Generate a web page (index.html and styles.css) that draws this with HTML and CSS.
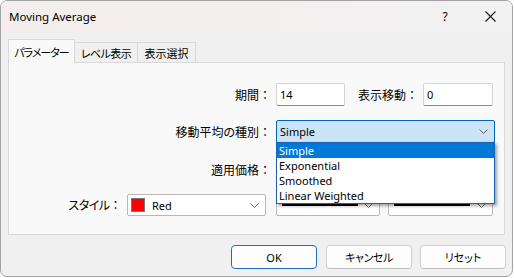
FILE: index.html
```html
<!DOCTYPE html>
<html>
    <head>
        <title>Moving Average</title>
        <link rel="stylesheet" href="styles.css">
    </head>
    <body>
        <div class="window">
            <div class="titlebar">
                <span class="title">Moving Average</span>
                <span class="help">?</span>
                <span class="close">
                    <svg width="11" height="11" viewBox="0 0 11 11"><path d="M0.5 0.5 L10.5 10.5 M10.5 0.5 L0.5 10.5" stroke="#1b1b1b" stroke-width="1.1" fill="none"/></svg>
                </span>
            </div>
            <div class="content">
                <div class="tabs">
                    <div class="tab active">パラメーター</div>
                    <div class="tab tab-level">レベル表示</div>
                    <div class="tab tab-show">表示選択</div>
                </div>
                <div class="panel">
                    <!-- period / shift -->
                    <div class="row row1">
                        <span class="lbl lbl-wide">期間<span class="colon">：</span></span>
                        <div class="input w-period">14</div>
                        <span class="lbl lbl-shift">表示移動<span class="colon">：</span></span>
                        <div class="input w-shift">0</div>
                    </div>
                    <!-- method, list is open -->
                    <div class="row row2">
                        <span class="lbl lbl-wide">移動平均の種別<span class="colon">：</span></span>
                        <div class="combo focused w-method">
                            <span class="ctext">Simple</span>
                            <svg class="chev" width="9" height="5" viewBox="0 0 9 5"><polyline points="0.5,0.5 4.5,4.5 8.5,0.5" stroke="#5f5f5f" fill="none"/></svg>
                        </div>
                        <ul class="droplist">
                            <li class="sel">Simple</li>
                            <li>Exponential</li>
                            <li>Smoothed</li>
                            <li>Linear Weighted</li>
                        </ul>
                    </div>
                    <div class="row row3">
                        <span class="lbl lbl-wide">適用価格<span class="colon">：</span></span>
                        <div class="combo w-method">
                            <svg class="chev" width="9" height="5" viewBox="0 0 9 5"><polyline points="0.5,0.5 4.5,4.5 8.5,0.5" stroke="#5f5f5f" fill="none"/></svg>
                        </div>
                    </div>
                    <div class="row row4">
                        <span class="lbl lbl-style">スタイル<span class="colon">：</span></span>
                        <div class="combo w-color">
                            <span class="swatch"></span>
                            <span class="ctext">Red</span>
                            <svg class="chev" width="9" height="5" viewBox="0 0 9 5"><polyline points="0.5,0.5 4.5,4.5 8.5,0.5" stroke="#5f5f5f" fill="none"/></svg>
                        </div>
                        <div class="combo w-width">
                            <span class="line"></span>
                            <svg class="chev" width="9" height="5" viewBox="0 0 9 5"><polyline points="0.5,0.5 4.5,4.5 8.5,0.5" stroke="#5f5f5f" fill="none"/></svg>
                        </div>
                        <div class="combo w-dash">
                            <span class="line"></span>
                            <svg class="chev" width="9" height="5" viewBox="0 0 9 5"><polyline points="0.5,0.5 4.5,4.5 8.5,0.5" stroke="#5f5f5f" fill="none"/></svg>
                        </div>
                    </div>
                </div>
                <div class="buttons">
                    <div class="btn default">OK</div>
                    <div class="btn btn-cancel">キャンセル</div>
                    <div class="btn btn-reset">リセット</div>
                </div>
            </div>
        </div>
    </body>
</html>
```

FILE: styles.css
```css
body
{
    margin: 0;
    background-color: #ffffff;
    font-family: "Noto Sans", "Noto Sans CJK JP", sans-serif;
    font-size: 11px;
    color: #000000;
    font-feature-settings: "palt";
}
.window
{
    width: 511px;
    height: 275px;
    border: 1px solid #a3a3a3;
    border-radius: 7px;
    overflow: hidden;
    background-color: #f0f0f0;
    display: flex;
    flex-direction: column;
}
.titlebar
{
    height: 31px;
    display: flex;
    align-items: center;
    background: linear-gradient(90deg, #f5eded, #f3efef 45%, #f2f2f2);
}
.title
{
    padding-left: 8px;
    font-size: 11.5px;
    flex: 1;
}
.help
{
    width: 14px;
    font-size: 12px;
    text-align: center;
    margin-right: 33px;
}
.close
{
    display: flex;
    margin-right: 16px;
}
.content
{
    padding: 0 7px;
    flex: 1;
}
.tabs
{
    margin-top: 8px;
    height: 22px;
    display: flex;
    align-items: flex-end;
}
.tab
{
    height: 19px;
    border: 1px solid #d9d9d9;
    border-bottom: none;
    background-color: #f0f0f0;
    white-space: nowrap;
    display: flex;
    align-items: center;
    justify-content: center;
}
.tab.active
{
    height: 23px;
    width: 65px;
    letter-spacing: -1px;
    background-color: #f9f9f9;
    margin-bottom: -1px;
    position: relative;
    z-index: 1;
}
.tab-level
{
    width: 62px;
    letter-spacing: -0.6px;
    border-left: none;
}
.tab-show
{
    width: 57px;
    border-left: none;
}
.panel
{
    height: 171px;
    border: 1px solid #d9d9d9;
    background-color: #f9f9f9;
}
.row
{
    display: flex;
    align-items: center;
}
.row1
{
    margin-top: 20px;
    height: 23px;
}
.row2
{
    margin-top: 14px;
    height: 23px;
    position: relative;
}
.row3
{
    margin-top: 15px;
    height: 23px;
}
.row4
{
    margin-top: 13px;
    height: 22px;
}
.lbl
{
    font-size: 12px;
    text-align: right;
    white-space: nowrap;
}
.colon
{
    font-feature-settings: normal;
}
.lbl-wide
{
    width: 262px;
}
.lbl-shift
{
    width: 73px;
}
.lbl-style
{
    width: 112px;
    letter-spacing: -0.5px;
}
.input
{
    box-sizing: border-box;
    height: 23px;
    background-color: #ffffff;
    border: 1px solid #d4d4d4;
    border-bottom-color: #8a8a8a;
    border-radius: 2px;
    padding-left: 3px;
    display: flex;
    align-items: center;
}
.w-period
{
    width: 69px;
    margin-left: 5px;
}
.w-shift
{
    width: 70px;
    margin-left: 5px;
}
.combo
{
    box-sizing: border-box;
    height: 100%;
    background-color: #ffffff;
    border: 1px solid #b8b8b8;
    border-radius: 2px;
    display: flex;
    align-items: center;
    padding: 0 6px 0 3px;
}
.combo.focused
{
    background-color: #cce4f7;
    border-color: #0067c0;
}
.ctext
{
    flex: 1;
}
.chev
{
    margin-left: auto;
}
.w-method
{
    width: 219px;
    margin-left: 5px;
}
.w-color
{
    width: 139px;
    margin-left: 6px;
}
.w-width
{
    width: 104px;
    margin-left: 10px;
}
.w-dash
{
    width: 105px;
    margin-left: 8px;
}
.swatch
{
    width: 12px;
    height: 12px;
    background-color: #ff0000;
    border: 1px solid #7a7a7a;
    margin-right: 7px;
}
.line
{
    width: 76px;
    height: 2px;
    margin-left: 2px;
    background-color: #000000;
}
.droplist
{
    position: absolute;
    left: 267px;
    top: 22px;
    width: 217px;
    margin: 0;
    padding: 0;
    list-style: none;
    background-color: #ffffff;
    border: 1px solid #1a62b4;
    box-shadow: 2px 2px 3px rgba(0, 0, 0, 0.35);
    z-index: 2;
}
.droplist li
{
    height: 15px;
    line-height: 15px;
    padding-left: 2px;
}
.droplist li.sel
{
    background-color: #0078d7;
    color: #ffffff;
}
.buttons
{
    margin-top: 10px;
    margin-right: -1px;
    display: flex;
    justify-content: flex-end;
}
.btn
{
    box-sizing: border-box;
    width: 86px;
    height: 24px;
    background-color: #fdfdfd;
    border: 1px solid #d0d0d0;
    border-bottom-color: #bdbdbd;
    border-radius: 4px;
    display: flex;
    align-items: center;
    justify-content: center;
}
.btn.default
{
    border-color: #1c6fc0;
}
.btn-cancel
{
    margin-left: 9px;
    letter-spacing: -0.4px;
}
.btn-reset
{
    margin-left: 8px;
}
```
